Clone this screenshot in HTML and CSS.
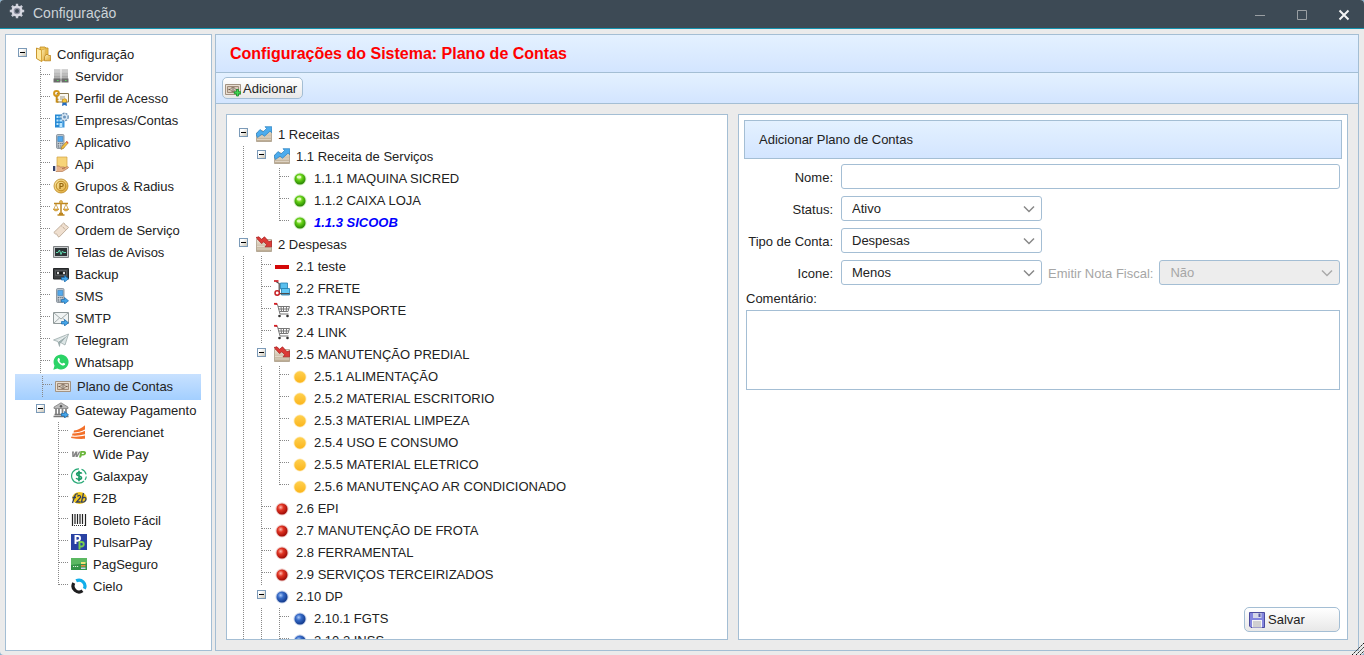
FILE: index.html
```html
<!DOCTYPE html>
<html lang="pt-BR">
<head>
<meta charset="utf-8">
<title>Configuração</title>
<link rel="stylesheet" href="styles.css">
</head>
<body>
<svg class="sprite" aria-hidden="true">
  <defs>
    <linearGradient id="g-gold" x1="0" y1="0" x2="1" y2="1"><stop offset="0" stop-color="#fdeeb0"/><stop offset="1" stop-color="#dfa532"/></linearGradient>
    <linearGradient id="g-grey" x1="0" y1="0" x2="0" y2="1"><stop offset="0" stop-color="#d6d6d6"/><stop offset="1" stop-color="#8c8c8c"/></linearGradient>
    <linearGradient id="g-toggle" x1="0" y1="0" x2="1" y2="1"><stop offset="0.3" stop-color="#fff"/><stop offset="1" stop-color="#c6bfae"/></linearGradient>
    <linearGradient id="g-paper" x1="0" y1="0" x2="0" y2="1"><stop offset="0" stop-color="#ebe3d5"/><stop offset="1" stop-color="#b9a88e"/></linearGradient>
    <radialGradient id="g-green" cx=".45" cy=".35" r=".6"><stop offset="0" stop-color="#c8f87c"/><stop offset=".5" stop-color="#5ecb12"/><stop offset="1" stop-color="#2d8a05"/></radialGradient>
    <radialGradient id="g-red" cx=".38" cy=".35" r=".65"><stop offset="0" stop-color="#ffb9ae"/><stop offset=".4" stop-color="#e03423"/><stop offset="1" stop-color="#a10b06"/></radialGradient>
    <radialGradient id="g-blue" cx=".38" cy=".35" r=".65"><stop offset="0" stop-color="#a9c8f7"/><stop offset=".4" stop-color="#376bc8"/><stop offset="1" stop-color="#123a8c"/></radialGradient>
    <linearGradient id="g-yellow" x1="0" y1="0" x2="0" y2="1"><stop offset="0" stop-color="#ffd04e"/><stop offset="1" stop-color="#fbb51c"/></linearGradient>
  </defs>
  <symbol id="minus-box" viewBox="0 0 9 9"><rect x=".5" y=".5" width="8" height="8" fill="url(#g-toggle)" stroke="#7b9ab8"/><path d="M2 4.500h5" stroke="#000"/></symbol>
  <symbol id="arrow-badge" viewBox="0 0 16 16"><path d="M8.500 11.500h3v-2l4 3.300-4 3.200v-2h-3z" fill="#45a5e8" stroke="#1769ad" stroke-width=".7"/></symbol>
  <symbol id="folder" viewBox="0 0 16 16"><path d="M5 1h5l1 1h2v6l-1 6H5z" fill="#f0c65a" stroke="#c28b1d" stroke-width=".8"/><path d="M1.500 2l5 2v11.500l-5-3z" fill="#ffe9a0" stroke="#c28b1d" stroke-width=".9"/><path d="M6.500 4l4.500-1.500v10L6.500 15.500z" fill="url(#g-gold)" stroke="#d09a2a" stroke-width=".6"/><path d="M11 8.500h2l.6 1h2v5.300H9.500v-4z" fill="url(#g-gold)" stroke="#bd8720" stroke-width=".8"/></symbol>
  <symbol id="server" viewBox="0 0 16 16"><path d="M1 1h6.500v12H1zM8.500 1H15v12H8.500z" fill="url(#g-grey)"/><path d="M1 4h6.500M8.500 4H15M1 7h6.500M8.500 7H15M1 10h6.500M8.500 10H15" stroke="#ececec" stroke-width=".4"/><path d="M.5 10.500h7v4h-7zM8.500 10.500h7v4h-7z" fill="#6c6c6c"/><path d="M4 12h1.500v1H4zM12 12h1.500v1H12z" fill="#55e05c"/></symbol>
  <symbol id="profile" viewBox="0 0 16 16"><path d="M4 3.500h11.500v8.500H4z" fill="#faf8f0" stroke="#8b7a50"/><path d="M7 7h5M7 9h3" stroke="#9e9985"/><circle cx="3.500" cy="3.500" r="2.400" fill="none" stroke="#d4971a" stroke-width="2"/><path d="M3.500 6v6.500M3.500 9.500h2M3.500 12h2" stroke="#c88d16" stroke-width="1.600"/><circle cx="11.500" cy="11" r="2.300" fill="#f6c736" stroke="#bb841a" stroke-width=".8"/><path d="M9.500 12.500L9 16l2.500-1 2.500 1-.5-3.500z" fill="#266cc0"/></symbol>
  <symbol id="company" viewBox="0 0 16 16"><path d="M2 2.500h7.500v13H2z" fill="#2789d4"/><path d="M3.500 4h2v2h-2zM6.500 4H9v2H6.500zM3.500 7.500h2v2h-2zM6.500 7.500H9v2H6.500zM3.500 11h2v2h-2zM6.500 11H9v4H6.500z" fill="#b9e6ff"/><path d="M9.500 9h2v6.500h-2z" fill="#3a96dc"/><circle cx="11.500" cy="5" r="3.700" fill="#d7e6f3" stroke="#6d93b7" stroke-width="1.400" stroke-dasharray="2 1"/><circle cx="11.500" cy="5" r="1.500" fill="#6c95bd"/></symbol>
  <symbol id="phone" viewBox="0 0 16 16"><rect x="3.500" y=".5" width="7.500" height="14" rx="1.200" fill="#bac3cc" stroke="#7c8791" stroke-width=".8"/><path d="M4.800 2.500h5v5h-5z" fill="#53a9ed" stroke="#337db7" stroke-width=".5"/><path d="M4.800 9h5v4.500h-5z" fill="#69737d"/><path d="M4.800 10.500h5M4.800 12h5M6.500 9v4.500M8.200 9v4.500" stroke="#dce2e7" stroke-width=".6"/></symbol>
  <symbol id="app" viewBox="0 0 16 16"><use href="#phone"/><path d="M8 15.500l.8-2.800 4.700-5.200 1.700 1.500-4.700 5.300z" fill="#f5c13e" stroke="#9e762a" stroke-width=".6"/><path d="M13 8l1.700 1.500.8-1-1.600-1.500z" fill="#dd5548"/></symbol>
  <symbol id="sms" viewBox="0 0 16 16"><use href="#phone"/><use href="#arrow-badge"/></symbol>
  <symbol id="api" viewBox="0 0 16 16"><path d="M4 1h10v11H4z" fill="#f7d478" stroke="#d0a244" stroke-width=".7"/><path d="M3 10.500c2-1 3.500-.5 4.500.5h3.500c1 .2 1 1.500 0 1.700h-2l5-2c1.500-.3 2 .8 1 1.500L9.500 15.500H3z" fill="#e9b48a" stroke="#a96c42" stroke-width=".6"/><path d="M0 10h2.500v5H0z" fill="#34416c"/><path d="M2.500 10h1v5h-1z" fill="#fff"/></symbol>
  <symbol id="coin" viewBox="0 0 16 16"><circle cx="8" cy="8" r="7" fill="url(#g-gold)" stroke="#bb881f" stroke-width=".8"/><circle cx="8" cy="8" r="4.800" fill="none" stroke="#bd8b22"/><path d="M7 11V5.500h1.700a1.400 1.400 0 0 1 0 3H7" fill="none" stroke="#94660d" stroke-width="1.200"/></symbol>
  <symbol id="scales" viewBox="0 0 16 16"><path d="M8 1v13M1 3.500h14M4.500 15h7M6 13.500h4" fill="none" stroke="#bd861f" stroke-width="1.500"/><circle cx="8" cy="2" r="1.500" fill="#e8bb55" stroke="#bd861f" stroke-width=".6"/><path d="M3 4L.7 9.500M3 4l2.300 5.500M13 4l-2.300 5.500M13 4l2.300 5.500" stroke="#c7993c" stroke-width=".8"/><path d="M.3 9h5.400c-.4 2.600-5 2.600-5.400 0zM10.300 9h5.400c-.4 2.600-5 2.600-5.400 0z" fill="#e1ad44" stroke="#bd861f" stroke-width=".5"/></symbol>
  <symbol id="ticket" viewBox="0 0 16 16"><path d="M.8 10.500L10.500 1l1.500 1c0 1 1 2 2 1.700l1.500 1.800L6 15.200l-1.700-1.500c.2-1.200-.7-2-1.800-1.700z" fill="#efdfcf" stroke="#b5a18d" stroke-width=".8"/><path d="M8.500 4l4.500 4" stroke="#ab937b" stroke-dasharray="1 1"/></symbol>
  <symbol id="monitor" viewBox="0 0 16 16"><path d="M.5 2.500h15v11H.5z" fill="#c5c8ca" stroke="#7d8082"/><path d="M2 4h12v8H2z" fill="#2c3335"/><path d="M3 8.500h2L6.500 6l1.500 4.500L9.500 7l1 1.500H13" fill="none" stroke="#60d9b0"/></symbol>
  <symbol id="tape" viewBox="0 0 16 16"><path d="M.5 2.500h15v10.500H.5z" fill="#3d3f41" stroke="#242628"/><path d="M2 4h12v6H2z" fill="#55585b"/><path d="M3 5.500h10v3H3z" fill="#181a1b"/><circle cx="5" cy="7" r="1.200" fill="#ddd"/><circle cx="11" cy="7" r="1.200" fill="#ddd"/><use href="#arrow-badge"/></symbol>
  <symbol id="mail" viewBox="0 0 16 16"><path d="M.5 2.500h15v11H.5z" fill="#f0f3f3" stroke="#909999"/><path d="M1 3l7 6 7-6M1 13l5.500-5M15 13L9.500 8" fill="none" stroke="#a2abab"/><use href="#arrow-badge"/></symbol>
  <symbol id="plane" viewBox="0 0 16 16"><path d="M.5 8L15.500 2 12 13 7.500 10.500z" fill="#dce5e5" stroke="#9cabab" stroke-width=".8"/><path d="M5 10l10-7.500L7 11.500l-.5 3z" fill="#9eb0b0" stroke="#87999a" stroke-width=".5"/><path d="M5 9.500L14.500 3" stroke="#fff" stroke-width=".8"/></symbol>
  <symbol id="whatsapp" viewBox="0 0 16 16"><path d="M.3 15.700l1.200-4a7.500 7.500 0 1 1 2.900 2.900z" fill="#2bd366"/><path d="M5.100 4.200c.7-.6 1.200-.3 1.500.5l.4 1c.1.500-.7.900-.6 1.200.6 1.300 1.500 2.100 2.800 2.600.4.100.8-1 1.300-.8l1.400.7c.6.300.2 1.300-.3 1.700-1.200.9-3 .1-4.300-.9-1.500-1.200-2.700-2.800-2.800-4 0-.8.200-1.500.6-2z" fill="#fff"/></symbol>
  <symbol id="note" viewBox="0 0 16 16"><path d="M.5 3.500h15v10H.5z" fill="#e8ded2" stroke="#a39382"/><path d="M2.500 5.500h11v6h-11z" fill="#d7c9ba" stroke="#9f8a78"/><circle cx="8" cy="8.500" r="2.200" fill="#ebe3d9" stroke="#826e5d" stroke-width=".9"/><path d="M8 7v3M3.500 8.500h1.500M11 8.500h1.500" stroke="#6b5848"/></symbol>
  <symbol id="note-add" viewBox="0 0 16 16"><use href="#note"/><path d="M11.500 8.500h2v2.200h2.200v2h-2.200V15h-2v-2.300H9.300v-2h2.200z" fill="#42d952" stroke="#168b29" stroke-width=".8"/></symbol>
  <symbol id="bank" viewBox="0 0 16 16"><path d="M8 .8l7 4.200v1.500H1V5z" fill="#bbb" stroke="#777" stroke-width=".7"/><circle cx="8" cy="4.200" r="1.200" fill="#555"/><path d="M3 6.500v6M6 6.500v6M9.500 6.500v6M13 6.500v6" stroke="#858585" stroke-width="1.800"/><path d="M1.500 12.500h13M.5 14.500h15" stroke="#777" stroke-width="1.500"/><use href="#arrow-badge"/></symbol>
  <symbol id="gerencianet" viewBox="0 0 16 16"><path d="M3 6.500c4-.6 7.500-2.400 11-5.300v4.300C10.500 7.500 6.500 8.500 2.500 8.500zM1.500 9.500c5 0 8.500-1 12.500-2.800v3.500C9.500 11.400 5 11.900 1 11.500zM.5 12.500c5.500.4 9.500.2 13.500-.9v3.200c-4.500.3-9.500 0-14-.8z" fill="#f3702a"/></symbol>
  <symbol id="widepay" viewBox="0 0 16 16"><path d="M1 5.500h2L2.500 9l2-3.500h2L6 9l2-3.500h1.500L6.500 11h-2l.3-2.500L3.400 11H1.300z" fill="#858585"/><path d="M9.500 5h3.500c3 0 2.800 4.500-.8 4.500h-1.400L10 11.500H8z" fill="#6cb73d"/><path d="M11 6.700h1.600c.8 0 .5 1.300-.5 1.300h-1.400z" fill="#fff"/></symbol>
  <symbol id="galaxpay" viewBox="0 0 16 16"><path d="M8 .8a7.200 7.200 0 1 0 5 12.200M10.500 1.300a7.200 7.200 0 0 1 4.600 5M15.300 8.500a7 7 0 0 1-1.300 3.300" fill="none" stroke="#2cab79" stroke-width="1.200"/><path d="M8 2.800v10.400M10.700 5.700C10 4.300 5.700 4.200 5.700 6.300S10.500 7.700 10.500 9.800 6 11.700 5.200 10" fill="none" stroke="#1d9c69" stroke-width="1.700"/></symbol>
  <symbol id="f2b" viewBox="0 0 16 16"><ellipse cx="8.500" cy="8" rx="7.300" ry="6" fill="#f3c71c"/><path d="M1.500 13L4 5.500C4.500 4 5.500 3.500 7 4M1.500 7.500H5M6.500 6.500C8 4.500 10 5.500 9.500 7.500L5.500 12H9.500M12.500 3L10.500 12C13 12.500 15 11 15 9s-2.500-2-3.500-.5" fill="none" stroke="#34415e" stroke-width="1.300"/></symbol>
  <symbol id="barcode" viewBox="0 0 16 16"><path d="M1.500 2v12M4 2v10M6.500 2v10M9 2v10M11.500 2v10M14.500 2v12" stroke="#222" stroke-width="1.200"/><path d="M3 13.500h11" stroke="#333" stroke-dasharray="1 1"/></symbol>
  <symbol id="pulsar" viewBox="0 0 16 16"><path d="M0 0h16v16H0z" fill="#2942a3"/><path d="M4.500 10V2h2.200a2.200 2.200 0 0 1 0 4.700H4.500" fill="none" stroke="#fff" stroke-width="1.900"/><path d="M8.500 15.500V8h2a2.100 2.100 0 0 1 0 4.500h-2" fill="none" stroke="#78cf4e" stroke-width="1.900"/></symbol>
  <symbol id="card" viewBox="0 0 16 16"><path d="M0 2h16v12H0z" fill="#349447"/><path d="M0 2h16v5L0 9z" fill="#5bb862"/><path d="M2 10.500h6" stroke="#d7efd7" stroke-dasharray="1.200 .8"/><path d="M10 6h4.500v2H10z" fill="#efe37a"/><path d="M10 9h4.500v1.500H10z" fill="#e98b42"/><path d="M10 11.500h4.500V13H10z" fill="#cbd5ef"/></symbol>
  <symbol id="cielo" viewBox="0 0 16 16"><path d="M5.200 2.800A6 6 0 0 1 13.300 10.800" fill="none" stroke="#12aeea" stroke-width="3.200"/><path d="M2.800 5A6 6 0 0 0 11.500 12.800" fill="none" stroke="#1d1d1f" stroke-width="3.200"/></symbol>
  <symbol id="chart-up" viewBox="0 0 16 16"><path d="M.5 7l5-2.500 4 1.500 6-3v12.500H.5z" fill="url(#g-paper)" stroke="#a3957f" stroke-width=".7"/><path d="M1 11h14M1 13.500h14" stroke="#f6f1e8" stroke-width=".5"/><path d="M0 8l4-4.500 3 2.500 3.500-3.500L9 .7h6.800v6L14 5.200l-5.500 5-2.500-2L1.500 11.500z" fill="#4cacee" stroke="#2a7fbe" stroke-width=".7"/></symbol>
  <symbol id="chart-down" viewBox="0 0 16 16"><path d="M.5 3.500h15v12H.5z" fill="url(#g-paper)" stroke="#a3957f" stroke-width=".7"/><path d="M1 10.500h14M1 13h14" stroke="#f6f1e8" stroke-width=".5"/><path d="M0 1.500L3 .8l2.500 2.500L8.500.8l4.500 5 2.700-1v6H9l1.800-2-3-3L5.500 7.500z" fill="#dc3b37" stroke="#a41b1b" stroke-width=".7"/></symbol>
  <symbol id="dash" viewBox="0 0 16 16"><path d="M1 7h14v4H1z" fill="#d40808"/></symbol>
  <symbol id="trolley" viewBox="0 0 16 16"><path d="M6.500 3h7v6h-7z" fill="#58bfee" stroke="#237fae" stroke-width=".8"/><path d="M7.500 8.500h8v6.500h-8z" fill="#5fc6f4" stroke="#237fae" stroke-width=".8"/><path d="M2 1.500l3.200 2v10.200h10.300" fill="none" stroke="#4c4c4c" stroke-width="1.200"/><path d="M0 1h4.500" stroke="#cd2026" stroke-width="1.700"/><circle cx="3.200" cy="13" r="2.200" fill="#fff" stroke="#c62024" stroke-width="1.500"/></symbol>
  <symbol id="cart" viewBox="0 0 16 16"><path d="M1.500 2.500h2l2.500 9.500h8.500M4 4.500h11.500l-1.500 5H5.500M4.500 7h10.500M7 4.500l.5 5M9.500 4.500v5M12.500 4.500l-.3 5" fill="none" stroke="#777"/><path d="M0 1.800h3.300" stroke="#d71d24" stroke-width="1.800"/><circle cx="5.500" cy="14" r="1.300" fill="#333"/><circle cx="13.500" cy="14" r="1.300" fill="#333"/></symbol>
  <symbol id="ball-green" viewBox="0 0 16 16"><circle cx="8" cy="9" r="6.500" fill="#b9e3a0" opacity=".6"/><circle cx="8" cy="9" r="5.500" fill="url(#g-green)"/><ellipse cx="7" cy="7" rx="2.400" ry="1.600" fill="#efffd6" opacity=".8"/></symbol>
  <symbol id="ball-red" viewBox="0 0 16 16"><circle cx="8" cy="9" r="6.500" fill="#dda5a0" opacity=".6"/><circle cx="8" cy="9" r="5.500" fill="url(#g-red)"/></symbol>
  <symbol id="ball-blue" viewBox="0 0 16 16"><circle cx="8" cy="9" r="6.500" fill="#9fb2da" opacity=".6"/><circle cx="8" cy="9" r="5.500" fill="url(#g-blue)"/></symbol>
  <symbol id="ball-yellow" viewBox="0 0 16 16"><circle cx="8" cy="9" r="6.500" fill="#ffdf91" opacity=".6"/><circle cx="8" cy="9" r="5.700" fill="url(#g-yellow)"/></symbol>
  <symbol id="floppy" viewBox="0 0 16 16"><path d="M.5.5h15v15H2L.5 14z" fill="#8385de" stroke="#4b4b9e"/><path d="M4 1h8.500v5H4z" fill="#d5d7e8"/><path d="M9.500 1.500h2v3.500h-2z" fill="#5759a5"/><path d="M3 8h10v7.500H3z" fill="#f5f5f7"/><path d="M4 10h8M4 12h8M4 14h8" stroke="#aaa"/></symbol>
  <symbol id="gear" viewBox="0 0 16 16"><path d="M8 .8v14.400M.8 8h14.400M2.900 2.900l10.200 10.200M13.100 2.900L2.900 13.100" stroke="#cbcdd8" stroke-width="2.400"/><circle cx="8" cy="8" r="5.600" fill="#d9dae3"/><circle cx="8" cy="8" r="3.300" fill="#8f90a2"/><circle cx="8" cy="8" r="2" fill="#3d4a55"/></symbol>
  <symbol id="chevron" viewBox="0 0 12 8"><path d="M1 1.500l5 5 5-5" fill="none" stroke="currentColor" stroke-width="1.500"/></symbol>
</svg>

<div class="window">
  <header class="titlebar">
    <svg class="icon"><use href="#gear"/></svg>
    <h1 class="titlebar-text">Configuração</h1>
    <div class="window-controls">
      <button type="button" class="window-btn" aria-label="Minimizar"><svg class="window-icon" viewBox="0 0 12 12"><path d="M1 6.500h10" stroke="#9a9fa3"/></svg></button>
      <button type="button" class="window-btn" aria-label="Maximizar"><svg class="window-icon" viewBox="0 0 12 12"><path d="M1.500 1.500h9v9h-9z" fill="none" stroke="#9a9fa3"/></svg></button>
      <button type="button" class="window-btn" aria-label="Fechar"><svg class="window-icon" viewBox="0 0 12 12"><path d="M1.500 1.500l9 9M10.500 1.500l-9 9" stroke="#f4f4f4" stroke-width="2"/></svg></button>
    </div>
  </header>

  <div class="workspace">
    <nav class="sidebar panel" aria-label="Configuração">
      <ul class="tree">
        <li><div class="row"><button type="button" class="toggle" aria-label="Recolher"><svg class="toggle-icon"><use href="#minus-box"/></svg></button><svg class="icon"><use href="#folder"/></svg><a href="#configuracao">Configuração</a></div>
          <ul>
            <li><div class="row"><span class="branch"></span><svg class="icon"><use href="#server"/></svg><a href="#servidor">Servidor</a></div></li>
            <li><div class="row"><span class="branch"></span><svg class="icon"><use href="#profile"/></svg><a href="#perfil">Perfil de Acesso</a></div></li>
            <li><div class="row"><span class="branch"></span><svg class="icon"><use href="#company"/></svg><a href="#empresas">Empresas/Contas</a></div></li>
            <li><div class="row"><span class="branch"></span><svg class="icon"><use href="#app"/></svg><a href="#aplicativo">Aplicativo</a></div></li>
            <li><div class="row"><span class="branch"></span><svg class="icon"><use href="#api"/></svg><a href="#api-config">Api</a></div></li>
            <li><div class="row"><span class="branch"></span><svg class="icon"><use href="#coin"/></svg><a href="#grupos">Grupos &amp; Radius</a></div></li>
            <li><div class="row"><span class="branch"></span><svg class="icon"><use href="#scales"/></svg><a href="#contratos">Contratos</a></div></li>
            <li><div class="row"><span class="branch"></span><svg class="icon"><use href="#ticket"/></svg><a href="#ordem">Ordem de Serviço</a></div></li>
            <li><div class="row"><span class="branch"></span><svg class="icon"><use href="#monitor"/></svg><a href="#avisos">Telas de Avisos</a></div></li>
            <li><div class="row"><span class="branch"></span><svg class="icon"><use href="#tape"/></svg><a href="#backup">Backup</a></div></li>
            <li><div class="row"><span class="branch"></span><svg class="icon"><use href="#sms"/></svg><a href="#sms-config">SMS</a></div></li>
            <li><div class="row"><span class="branch"></span><svg class="icon"><use href="#mail"/></svg><a href="#smtp">SMTP</a></div></li>
            <li><div class="row"><span class="branch"></span><svg class="icon"><use href="#plane"/></svg><a href="#telegram">Telegram</a></div></li>
            <li><div class="row"><span class="branch"></span><svg class="icon"><use href="#whatsapp"/></svg><a href="#whatsapp-config">Whatsapp</a></div></li>
            <li><div class="row row-selected"><span class="branch"></span><svg class="icon"><use href="#note"/></svg><a href="#plano" aria-current="page">Plano de Contas</a></div></li>
            <li><div class="row"><button type="button" class="toggle" aria-label="Recolher"><svg class="toggle-icon"><use href="#minus-box"/></svg></button><svg class="icon"><use href="#bank"/></svg><a href="#gateway">Gateway Pagamento</a></div>
              <ul>
                <li><div class="row"><span class="branch"></span><svg class="icon"><use href="#gerencianet"/></svg><a href="#gw-gerencianet">Gerencianet</a></div></li>
                <li><div class="row"><span class="branch"></span><svg class="icon"><use href="#widepay"/></svg><a href="#gw-widepay">Wide Pay</a></div></li>
                <li><div class="row"><span class="branch"></span><svg class="icon"><use href="#galaxpay"/></svg><a href="#gw-galaxpay">Galaxpay</a></div></li>
                <li><div class="row"><span class="branch"></span><svg class="icon"><use href="#f2b"/></svg><a href="#gw-f2b">F2B</a></div></li>
                <li><div class="row"><span class="branch"></span><svg class="icon"><use href="#barcode"/></svg><a href="#gw-boleto">Boleto Fácil</a></div></li>
                <li><div class="row"><span class="branch"></span><svg class="icon"><use href="#pulsar"/></svg><a href="#gw-pulsarpay">PulsarPay</a></div></li>
                <li><div class="row"><span class="branch"></span><svg class="icon"><use href="#card"/></svg><a href="#gw-pagseguro">PagSeguro</a></div></li>
                <li><div class="row"><span class="branch"></span><svg class="icon"><use href="#cielo"/></svg><a href="#gw-cielo">Cielo</a></div></li>
              </ul>
            </li>
          </ul>
        </li>
      </ul>
    </nav>

    <main class="content">
      <div class="content-head"><h2 class="content-title">Configurações do Sistema: Plano de Contas</h2></div>
      <div class="toolbar">
        <button type="button" class="btn"><svg class="icon"><use href="#note-add"/></svg>Adicionar</button>
      </div>
      <div class="content-body">
        <section class="accounts panel" aria-label="Contas">
          <ul class="tree">
            <li><div class="row"><button type="button" class="toggle" aria-label="Recolher"><svg class="toggle-icon"><use href="#minus-box"/></svg></button><svg class="icon"><use href="#chart-up"/></svg><a href="#c1">1 Receitas</a></div>
              <ul class="continued">
                <li><div class="row"><button type="button" class="toggle" aria-label="Recolher"><svg class="toggle-icon"><use href="#minus-box"/></svg></button><svg class="icon"><use href="#chart-up"/></svg><a href="#c1-1">1.1 Receita de Serviços</a></div>
                  <ul>
                    <li><div class="row"><span class="branch"></span><svg class="icon"><use href="#ball-green"/></svg><a href="#c1-1-1">1.1.1 MAQUINA SICRED</a></div></li>
                    <li><div class="row"><span class="branch"></span><svg class="icon"><use href="#ball-green"/></svg><a href="#c1-1-2">1.1.2 CAIXA LOJA</a></div></li>
                    <li><div class="row"><span class="branch"></span><svg class="icon"><use href="#ball-green"/></svg><a class="highlight" href="#c1-1-3">1.1.3 SICOOB</a></div></li>
                  </ul>
                </li>
              </ul>
            </li>
            <li><div class="row"><button type="button" class="toggle" aria-label="Recolher"><svg class="toggle-icon"><use href="#minus-box"/></svg></button><svg class="icon"><use href="#chart-down"/></svg><a href="#c2">2 Despesas</a></div>
              <ul class="continued">
                <li><div class="row"><span class="branch"></span><svg class="icon"><use href="#dash"/></svg><a href="#c2-1">2.1 teste</a></div></li>
                <li><div class="row"><span class="branch"></span><svg class="icon"><use href="#trolley"/></svg><a href="#c2-2">2.2 FRETE</a></div></li>
                <li><div class="row"><span class="branch"></span><svg class="icon"><use href="#cart"/></svg><a href="#c2-3">2.3 TRANSPORTE</a></div></li>
                <li><div class="row"><span class="branch"></span><svg class="icon"><use href="#cart"/></svg><a href="#c2-4">2.4 LINK</a></div></li>
                <li><div class="row"><button type="button" class="toggle" aria-label="Recolher"><svg class="toggle-icon"><use href="#minus-box"/></svg></button><svg class="icon"><use href="#chart-down"/></svg><a href="#c2-5">2.5 MANUTENÇÃO PREDIAL</a></div>
                  <ul class="continued">
                    <li><div class="row"><span class="branch"></span><svg class="icon"><use href="#ball-yellow"/></svg><a href="#c2-5-1">2.5.1 ALIMENTAÇÃO</a></div></li>
                    <li><div class="row"><span class="branch"></span><svg class="icon"><use href="#ball-yellow"/></svg><a href="#c2-5-2">2.5.2 MATERIAL ESCRITORIO</a></div></li>
                    <li><div class="row"><span class="branch"></span><svg class="icon"><use href="#ball-yellow"/></svg><a href="#c2-5-3">2.5.3 MATERIAL LIMPEZA</a></div></li>
                    <li><div class="row"><span class="branch"></span><svg class="icon"><use href="#ball-yellow"/></svg><a href="#c2-5-4">2.5.4 USO E CONSUMO</a></div></li>
                    <li><div class="row"><span class="branch"></span><svg class="icon"><use href="#ball-yellow"/></svg><a href="#c2-5-5">2.5.5 MATERIAL ELETRICO</a></div></li>
                    <li><div class="row"><span class="branch"></span><svg class="icon"><use href="#ball-yellow"/></svg><a href="#c2-5-6">2.5.6 MANUTENÇAO AR CONDICIONADO</a></div></li>
                  </ul>
                </li>
                <li><div class="row"><span class="branch"></span><svg class="icon"><use href="#ball-red"/></svg><a href="#c2-6">2.6 EPI</a></div></li>
                <li><div class="row"><span class="branch"></span><svg class="icon"><use href="#ball-red"/></svg><a href="#c2-7">2.7 MANUTENÇÃO DE FROTA</a></div></li>
                <li><div class="row"><span class="branch"></span><svg class="icon"><use href="#ball-red"/></svg><a href="#c2-8">2.8 FERRAMENTAL</a></div></li>
                <li><div class="row"><span class="branch"></span><svg class="icon"><use href="#ball-red"/></svg><a href="#c2-9">2.9 SERVIÇOS TERCEIRIZADOS</a></div></li>
                <li><div class="row"><button type="button" class="toggle" aria-label="Recolher"><svg class="toggle-icon"><use href="#minus-box"/></svg></button><svg class="icon"><use href="#ball-blue"/></svg><a href="#c2-10">2.10 DP</a></div>
                  <ul class="continued">
                    <li><div class="row"><span class="branch"></span><svg class="icon"><use href="#ball-blue"/></svg><a href="#c2-10-1">2.10.1 FGTS</a></div></li>
                    <li><div class="row"><span class="branch"></span><svg class="icon"><use href="#ball-blue"/></svg><a href="#c2-10-2">2.10.2 INSS</a></div></li>
                  </ul>
                </li>
              </ul>
            </li>
          </ul>
        </section>

        <form class="editor panel">
          <h3 class="editor-title">Adicionar Plano de Contas</h3>
          <div class="fields">
            <label for="nome">Nome:</label>
            <input class="control" id="nome" type="text">
            <label for="status">Status:</label>
            <div class="picker"><select class="control" id="status"><option>Ativo</option></select><svg class="chevron"><use href="#chevron"/></svg></div>
            <label for="tipo">Tipo de Conta:</label>
            <div class="picker"><select class="control" id="tipo"><option>Despesas</option></select><svg class="chevron"><use href="#chevron"/></svg></div>
            <label for="icone">Icone:</label>
            <div class="field-pair">
              <div class="picker"><select class="control" id="icone"><option>Menos</option></select><svg class="chevron"><use href="#chevron"/></svg></div>
              <label class="label-disabled" for="nota">Emitir Nota Fiscal:</label>
              <div class="picker picker-fill"><select class="control" id="nota" disabled><option>Não</option></select><svg class="chevron"><use href="#chevron"/></svg></div>
            </div>
          </div>
          <div class="comment">
            <label for="comentario">Comentário:</label>
            <textarea class="comment-box" id="comentario"></textarea>
          </div>
          <div class="actions">
            <button type="submit" class="btn btn-save"><svg class="icon"><use href="#floppy"/></svg>Salvar</button>
          </div>
        </form>
      </div>
    </main>
  </div>
  <svg class="resize-grip" viewBox="0 0 12 12" aria-hidden="true"><path d="M0 12L12 0M4 12l8-8M8 12l4-4" stroke="#111" stroke-dasharray="2 1"/></svg>
</div>
</body>
</html>
```
FILE: styles.css
```css
:root {
  --line: #a4bed4;
  --surface: #ebebeb;
  --head: linear-gradient(#e4f1ff, #d3e5ff);
  --dot: #888;
}

* {
  box-sizing: border-box;
}

body {
  margin: 0;
  background: #8ab4d0;
  color: #222;
  font-family: "Liberation Sans", Arial, sans-serif;
  font-size: 13px;
  line-height: 22px;
}

button,
input,
select,
textarea {
  font: inherit;
  color: inherit;
}

h1,
h2,
h3,
ul {
  margin: 0;
  padding: 0;
}

.sprite {
  position: absolute;
  width: 0;
  height: 0;
}

.window {
  position: relative;
  display: flex;
  flex-direction: column;
  height: 100vh;
  overflow: hidden;
  background: var(--surface);
  border-radius: 4px;
}

.icon {
  flex: none;
  width: 16px;
  height: 16px;
}

/* Title bar */
.titlebar {
  display: flex;
  flex: none;
  align-items: flex-start;
  gap: 8px;
  height: 29px;
  padding: 3px 14px 0 9px;
  background: #3d4a55;
  border-bottom: 1px solid #1593ae;
}

.titlebar-text {
  color: #ccd3d8;
  font-size: 14px;
  font-weight: normal;
  line-height: 20px;
}

.window-controls {
  display: flex;
  gap: 30px;
  margin-left: auto;
  padding-top: 6px;
}

.window-btn {
  display: block;
  padding: 0;
  background: none;
  border: 0;
}

.window-icon {
  display: block;
  width: 12px;
  height: 12px;
}

/* Layout */
.workspace {
  display: flex;
  flex: 1;
  gap: 3px;
  min-height: 0;
  padding: 5px 5px 4px;
}

.panel {
  background: #fff;
  border: 1px solid var(--line);
}

.sidebar {
  flex: none;
  width: 207px;
  padding: 9px 10px 0 12px;
  overflow: hidden;
}

.content {
  display: flex;
  flex: 1;
  flex-direction: column;
  min-width: 0;
  border: 1px solid var(--line);
}

.content-head {
  padding: 8px 14px 7px;
  background: var(--head);
  border-bottom: 1px solid var(--line);
}

.content-title {
  color: #f00;
  font-size: 16px;
}

.toolbar {
  padding: 4px 6px;
  background: var(--head);
  border-bottom: 1px solid var(--line);
}

.content-body {
  display: grid;
  grid-template-columns: minmax(0, 502fr) minmax(0, 610fr);
  grid-template-rows: minmax(0, 1fr);
  flex: 1;
  gap: 10px;
  min-height: 0;
  padding: 10px;
}

.accounts {
  padding: 9px 12px 0;
  overflow: hidden;
}

/* Tree */
.tree,
.tree ul {
  list-style: none;
}

.tree ul {
  padding-left: 18px;
}

.tree .continued {
  background: repeating-linear-gradient(var(--dot) 0 1px, transparent 1px 2px) 4px 0 / 1px 100% no-repeat;
}

.row {
  display: flex;
  height: 22px;
  white-space: nowrap;
}

.row .icon {
  margin: 2px 6px 0 0;
}

.row a {
  color: #222;
  text-decoration: none;
}

.row .highlight {
  color: #00f;
  font-style: italic;
  font-weight: bold;
}

.toggle {
  display: flex;
  flex: none;
  align-items: flex-start;
  width: 17px;
  padding: 4px 0 0;
  background: none;
  border: 0;
}

.toggle-icon {
  width: 9px;
  height: 9px;
}

.branch {
  flex: none;
  width: 17px;
  background:
    repeating-linear-gradient(var(--dot) 0 1px, transparent 1px 2px) 4px 0 / 1px 100% no-repeat,
    repeating-linear-gradient(90deg, transparent 0 1px, var(--dot) 1px 2px) 4px 8px / 11px 1px no-repeat;
}

.tree li:last-child > .row .branch {
  background-size: 1px 9px, 11px 1px;
}

.row-selected {
  height: 26px;
  margin-left: -21px;
  padding: 2px 0 2px 23px;
  background: linear-gradient(#c8e1ff, #a3cfff);
}

/* Buttons */
.btn {
  display: inline-flex;
  align-items: center;
  gap: 2px;
  height: 22px;
  padding: 1px 5px 0 2px;
  background: linear-gradient(#fff, #e8e8e8);
  border: 1px solid var(--line);
  border-radius: 5px;
  vertical-align: top;
}

.btn-save {
  gap: 3px;
  width: 96px;
  height: 25px;
  padding: 1px 4px 0;
}

/* Form */
.editor {
  display: flex;
  flex-direction: column;
  padding: 5px;
}

.editor-title {
  padding: 8px 14px 7px;
  background: var(--head);
  border: 1px solid var(--line);
  font-size: 13px;
  font-weight: normal;
}

.fields {
  display: grid;
  grid-template-columns: 87px 1fr;
  align-items: center;
  gap: 7px 8px;
  padding: 5px 2px 0;
}

.fields label {
  padding-top: 2px;
  text-align: right;
  white-space: nowrap;
}

.control {
  width: 100%;
  height: 25px;
  padding: 0 10px;
  background: #fff;
  border: 1px solid var(--line);
  border-radius: 3px;
}

select.control {
  grid-area: 1 / 1;
  appearance: none;
}

.control:disabled {
  background: #ededed;
  color: #a6a6a6;
  opacity: 1;
}

.picker {
  display: grid;
  align-items: center;
  width: 201px;
}

.picker-fill {
  flex: 1;
  width: auto;
}

.chevron {
  grid-area: 1 / 1;
  justify-self: end;
  width: 12px;
  height: 8px;
  margin-right: 7px;
  color: #888;
  pointer-events: none;
}

.control:disabled + .chevron {
  color: #aaa;
}

.field-pair {
  display: flex;
  align-items: center;
  gap: 6px;
}

.label-disabled {
  color: #a6a6a6;
}

.comment {
  display: flex;
  flex-direction: column;
  padding: 3px 2px 0;
}

.comment-box {
  height: 80px;
  border: 1px solid var(--line);
  resize: none;
}

.actions {
  display: flex;
  justify-content: flex-end;
  margin-top: auto;
  padding: 0 2px 2px 0;
}

.resize-grip {
  position: absolute;
  right: 0;
  bottom: 0;
  width: 12px;
  height: 12px;
}
```
